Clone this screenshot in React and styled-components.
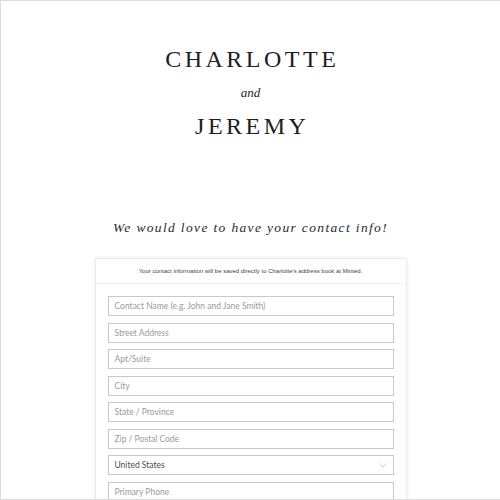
import React from "react";
import styled, { createGlobalStyle } from "styled-components";

const GlobalStyle = createGlobalStyle`
  html, body {
    margin: 0;
    padding: 0;
    background: #fff;
  }
  * {
    box-sizing: border-box;
  }
`;

const Frame = styled.div`
  width: 500px;
  height: 500px;
  overflow: hidden;
  border-top: 1px solid #dcdcdc;
  border-left: 1px solid #dcdcdc;
  border-bottom: 1px solid #dcdcdc;
  display: flex;
  flex-direction: column;
  align-items: center;
  background: #fff;
`;

const Names = styled.div`
  display: flex;
  flex-direction: column;
  align-items: center;
  padding-top: 44px;
  font-family: "Liberation Serif", serif;
  color: #1e1e1e;
`;

const Name = styled.div`
  font-size: 24px;
  line-height: 28px;
  letter-spacing: 3.5px;
  margin-right: -3.5px;
`;

const And = styled.div`
  font-style: italic;
  font-size: 13px;
  line-height: 16px;
  margin: 12px 0 11px;
`;

const Invite = styled.div`
  margin-top: 80px;
  font-family: "Liberation Serif", serif;
  font-style: italic;
  font-size: 13.5px;
  letter-spacing: 1.35px;
  color: #2a2a2a;
`;

const Card = styled.div`
  margin-top: 22px;
  width: 312px;
  flex: 1;
  border: 1px solid #ececec;
  border-bottom: none;
  box-shadow: 0 0 4px rgba(0, 0, 0, 0.08);
  background: #fff;
`;

const Note = styled.div`
  height: 25px;
  display: flex;
  align-items: center;
  justify-content: center;
  border-bottom: 1px solid #f0f0f0;
  font-family: "Liberation Sans", sans-serif;
  font-size: 6px;
  color: #444;
`;

const Fields = styled.div`
  display: flex;
  flex-direction: column;
  gap: 6.5px;
  padding: 12px 12px 0;
`;

const Field = styled.div`
  height: 20px;
  border: 1px solid #c8c8c8;
  display: flex;
  align-items: center;
  justify-content: space-between;
  padding: 0 6px 0 6px;
  font-family: "Lato", sans-serif;
  font-size: 8.5px;
  color: ${(p) => (p.$filled ? "#4a4a4a" : "#9a9a9a")};
`;

const Chevron = () => (
  <svg width="8" height="5" viewBox="0 0 8 5" fill="none">
    <path d="M0.5 0.5 L4 4 L7.5 0.5" stroke="#bdbdbd" strokeWidth="0.8" />
  </svg>
);

const fields = [
  "Contact Name (e.g. John and Jane Smith)",
  "Street Address",
  "Apt/Suite",
  "City",
  "State / Province",
  "Zip / Postal Code",
];

const App = () => (
  <>
    <GlobalStyle />
    <Frame>
      <Names>
        <Name>CHARLOTTE</Name>
        <And>and</And>
        <Name>JEREMY</Name>
      </Names>
      <Invite>We would love to have your contact info!</Invite>
      <Card>
        <Note>
          Your contact information will be saved directly to Charlotte's address book at Minted.
        </Note>
        <Fields>
          {fields.map((f) => (
            <Field key={f}>{f}</Field>
          ))}
          <Field $filled>
            United States
            <Chevron />
          </Field>
          <Field>Primary Phone</Field>
        </Fields>
      </Card>
    </Frame>
  </>
);

export default App;
